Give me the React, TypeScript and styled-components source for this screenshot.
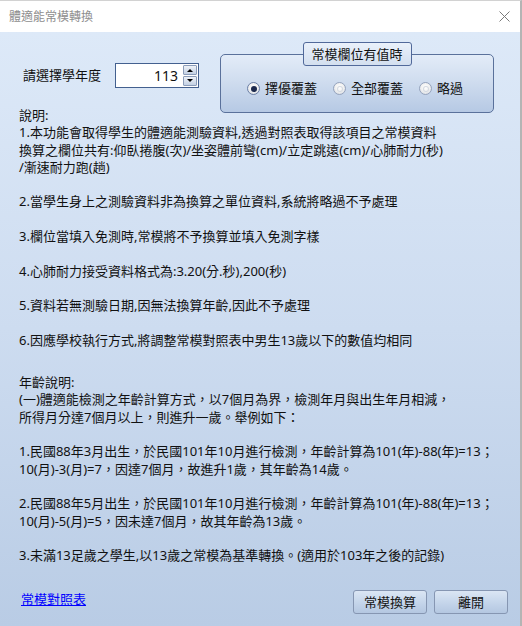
import React from "react";
import styled, { createGlobalStyle } from "styled-components";

const GlobalStyle = createGlobalStyle`
  html, body {
    margin: 0;
    padding: 0;
    background: #ffffff;
  }
  body {
    font-family: "Noto Sans", "Noto Sans CJK TC", sans-serif;
    color: #111111;
  }
`;

const Window = styled.div`
  width: 522px;
  height: 626px;
  box-sizing: border-box;
  border-top: 1px solid #d2d2d2;
  border-right: 2px solid #b4b4b4;
  display: flex;
  flex-direction: column;
  background: #ffffff;
`;

const TitleBar = styled.div`
  height: 31px;
  flex: none;
  display: flex;
  align-items: center;
  padding: 0 10px 0 9px;
  background: #ffffff;
`;

const Title = styled.div`
  font-size: 12px;
  line-height: 16px;
  color: #8e8e8e;
`;

const CloseButton = styled.button`
  margin-left: auto;
  width: 11px;
  height: 11px;
  padding: 0;
  border: 0;
  background: transparent;
  display: flex;
  cursor: default;
`;

const Body = styled.div`
  flex: 1;
  display: flex;
  flex-direction: column;
  padding: 10px 12px 12px 19px;
  background: linear-gradient(180deg, #dde9f8 0%, #cddcf0 50%, #b9cce5 100%);
`;

const TopRow = styled.div`
  display: flex;
  align-items: flex-start;
`;

const YearField = styled.div`
  display: flex;
  align-items: center;
  gap: 14px;
  margin: 21px 0 0 4px;
`;

const FieldLabel = styled.span`
  font-size: 13px;
  line-height: 17px;
`;

const SpinBox = styled.div`
  width: 84px;
  height: 25px;
  box-sizing: border-box;
  border: 1px solid #43608f;
  background: #ffffff;
  display: flex;
  align-items: stretch;
`;

const SpinValue = styled.div`
  flex: 1;
  font-size: 14px;
  line-height: 23px;
  text-align: right;
  padding-right: 5px;
  color: #111111;
`;

const SpinButtons = styled.div`
  display: flex;
  flex-direction: column;
  gap: 1px;
  margin: 1px 1px 0 0;
`;

const SpinButton = styled.div`
  width: 14px;
  height: 10px;
  box-sizing: border-box;
  border: 1px solid #8b9cb9;
  border-radius: 1px;
  background: linear-gradient(180deg, #eef2f8 0%, #c3d0e3 100%);
  display: flex;
  align-items: center;
  justify-content: center;
`;

const Group = styled.div`
  width: 274px;
  margin-left: 21px;
  display: flex;
  flex-direction: column;
  align-items: center;
`;

const Legend = styled.div`
  position: relative;
  z-index: 1;
  height: 24px;
  box-sizing: border-box;
  padding: 0 8px;
  border: 1px solid #51699a;
  border-radius: 3px;
  background: linear-gradient(180deg, #eaf1fb 0%, #d3dfef 100%);
  font-size: 13px;
  line-height: 22px;
`;

const Panel = styled.div`
  margin-top: -12px;
  width: 100%;
  height: 59px;
  box-sizing: border-box;
  border: 1px solid #5a719b;
  border-radius: 5px;
  background: linear-gradient(180deg, #e3ecf8 0%, #d0ddef 45%, #b6c9e4 100%);
  display: flex;
  align-items: flex-start;
  gap: 16px;
  padding: 25px 0 0 26px;
`;

const RadioOption = styled.label`
  display: flex;
  align-items: center;
  gap: 5px;
  font-size: 13px;
  line-height: 17px;
`;

const RadioMark = styled.span<{ $checked?: boolean }>`
  width: 13px;
  height: 13px;
  box-sizing: border-box;
  border-radius: 50%;
  border: 1px solid ${(p) => (p.$checked ? "#6b7fa6" : "#95a3bd")};
  background: radial-gradient(circle at 50% 40%, #ffffff 0%, #f2f2f2 45%, #cfd5de 100%);
  display: flex;
  align-items: center;
  justify-content: center;

  &::after {
    content: "";
    width: 6px;
    height: 6px;
    border-radius: 50%;
    background: ${(p) => (p.$checked ? "#1c2a4e" : "transparent")};
    box-shadow: ${(p) => (p.$checked ? "none" : "inset 0 0 0 1px #d4d9e1")};
  }
`;

const NoteBlock = styled.div<{ $gap?: number }>`
  margin-top: ${(p) => p.$gap ?? 0}px;
  font-size: 13px;
  line-height: 17.3px;
  white-space: pre;
`;

const Para = styled.div`
  & + & {
    margin-top: 17.3px;
  }
`;

const Footer = styled.div`
  margin-top: auto;
  display: flex;
  align-items: flex-start;
`;

const TableLink = styled.a`
  margin: 1px 0 0 2px;
  font-size: 13px;
  line-height: 17px;
  color: #0000ff;
  text-decoration: underline;
  cursor: pointer;
`;

const Buttons = styled.div`
  margin-left: auto;
  display: flex;
  gap: 7px;
`;

const Button = styled.button`
  width: 74px;
  height: 24px;
  box-sizing: border-box;
  border: 1px solid #8696b2;
  border-radius: 3px;
  background: linear-gradient(180deg, #dbe6f4 0%, #c6d6eb 50%, #b4c7e1 100%);
  font-family: inherit;
  font-size: 13px;
  line-height: 20px;
  color: #141414;
  padding: 0;
  cursor: default;
`;

const Arrow = ({ up }: { up?: boolean }) => (
  <svg width="6" height="4" viewBox="0 0 6 4">
    <path d={up ? "M0 4 L3 1 L6 4 Z" : "M0 0 L3 3 L6 0 Z"} fill="#000" />
  </svg>
);

const notes = [
  "說明:\n1.本功能會取得學生的體適能測驗資料,透過對照表取得該項目之常模資料\n換算之欄位共有:仰臥捲腹(次)/坐姿體前彎(cm)/立定跳遠(cm)/心肺耐力(秒)\n/漸速耐力跑(趟)",
  "2.當學生身上之測驗資料非為換算之單位資料,系統將略過不予處理",
  "3.欄位當填入免測時,常模將不予換算並填入免測字樣",
  "4.心肺耐力接受資料格式為:3.20(分.秒),200(秒)",
  "5.資料若無測驗日期,因無法換算年齡,因此不予處理",
  "6.因應學校執行方式,將調整常模對照表中男生13歲以下的數值均相同",
];

const ageNotes = [
  "年齡說明:\n(一)體適能檢測之年齡計算方式，以7個月為界，檢測年月與出生年月相減，\n所得月分達7個月以上，則進升一歲。舉例如下：",
  "1.民國88年3月出生，於民國101年10月進行檢測，年齡計算為101(年)-88(年)=13；\n10(月)-3(月)=7，因達7個月，故進升1歲，其年齡為14歲。",
  "2.民國88年5月出生，於民國101年10月進行檢測，年齡計算為101(年)-88(年)=13；\n10(月)-5(月)=5，因未達7個月，故其年齡為13歲。",
  "3.未滿13足歲之學生,以13歲之常模為基準轉換。(適用於103年之後的記錄)",
];

const options = [
  { label: "擇優覆蓋", checked: true },
  { label: "全部覆蓋", checked: false },
  { label: "略過", checked: false },
];

export default function App() {
  return (
    <>
      <GlobalStyle />
      <Window>
        <TitleBar>
          <Title>體適能常模轉換</Title>
          <CloseButton aria-label="close">
            <svg width="11" height="11" viewBox="0 0 11 11">
              <path d="M0.5 0.5 L10.5 10.5 M10.5 0.5 L0.5 10.5" stroke="#7a7a7a" strokeWidth="1" />
            </svg>
          </CloseButton>
        </TitleBar>
        <Body>
          <TopRow>
            <YearField>
              <FieldLabel>請選擇學年度</FieldLabel>
              <SpinBox>
                <SpinValue>113</SpinValue>
                <SpinButtons>
                  <SpinButton>
                    <Arrow up />
                  </SpinButton>
                  <SpinButton>
                    <Arrow />
                  </SpinButton>
                </SpinButtons>
              </SpinBox>
            </YearField>
            <Group>
              <Legend>常模欄位有值時</Legend>
              <Panel>
                {options.map((o) => (
                  <RadioOption key={o.label}>
                    <RadioMark $checked={o.checked} />
                    {o.label}
                  </RadioOption>
                ))}
              </Panel>
            </Group>
          </TopRow>
          <NoteBlock $gap={-6}>
            {notes.map((n) => (
              <Para key={n}>{n}</Para>
            ))}
          </NoteBlock>
          <NoteBlock $gap={25}>
            {ageNotes.map((n) => (
              <Para key={n}>{n}</Para>
            ))}
          </NoteBlock>
          <Footer>
            <TableLink>常模對照表</TableLink>
            <Buttons>
              <Button>常模換算</Button>
              <Button>離開</Button>
            </Buttons>
          </Footer>
        </Body>
      </Window>
    </>
  );
}
